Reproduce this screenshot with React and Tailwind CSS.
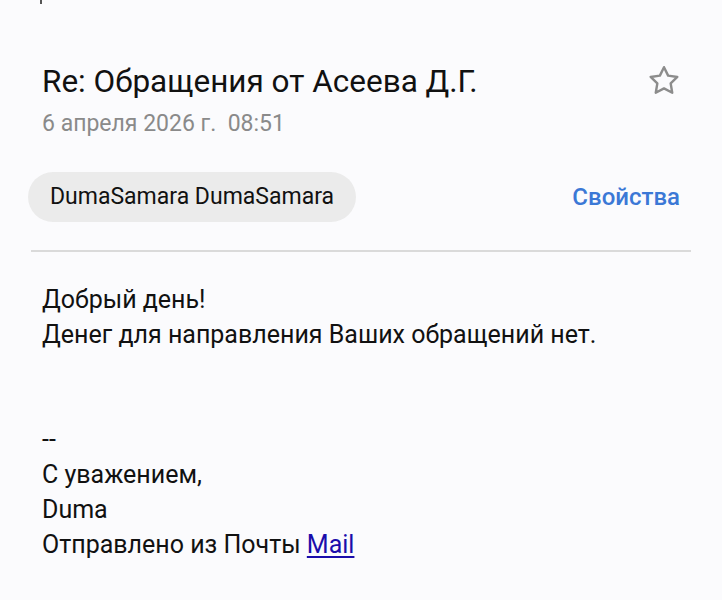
import React from 'react';

const Star = () => (
  <svg width="36" height="36" viewBox="0 0 24 24" fill="none" stroke="#8c8c8c" strokeWidth="1.6" strokeLinejoin="round">
    <path d="M12 2.8l2.75 5.6 6.15.9-4.45 4.35 1.05 6.15L12 16.9l-5.5 2.9 1.05-6.15L3.1 9.3l6.15-.9L12 2.8z" />
  </svg>
);

export default function App() {
  const font = { fontFamily: 'Roboto, "Noto Sans", sans-serif' };
  return (
    <div className="w-[722px] h-[600px] bg-[#fbfbfd] overflow-hidden relative" style={font}>
      <div className="absolute left-[40px] top-0 w-[2px] h-[4px] bg-[#555]" />
      <div className="pt-[62px] pl-[42px] pr-[38px] flex items-start justify-between">
        <div className="text-[31.5px] leading-[40px] text-[#111]">Re: Обращения от Асеева Д.Г.</div>
        <div className="mt-[1px] mr-[2px]"><Star /></div>
      </div>
      <div className="pl-[42px] mt-[8px] text-[23px] leading-[28px] text-[#8a8a8a] whitespace-pre">6 апреля 2026 г.  08:51</div>
      <div className="mt-[34px] pl-[28px] pr-[42px] flex items-center justify-between">
        <div className="h-[50px] px-[22px] rounded-full bg-[#ebebeb] flex items-center text-[23px] text-[#111]">DumaSamara DumaSamara</div>
        <div className="text-[24px] font-medium text-[#3b78d6]">Свойства</div>
      </div>
      <div className="mx-[31px] mt-[28px] h-[2px] bg-[#dadada]" />
      <div className="pl-[42px] mt-[30px] text-[25px] leading-[35px] text-[#111]">
        <div>Добрый день!</div>
        <div>Денег для направления Ваших обращений нет.</div>
        <div className="h-[35px]" />
        <div className="h-[35px]" />
        <div>--</div>
        <div>С уважением,</div>
        <div>Duma</div>
        <div>Отправлено из Почты <a href="#" className="text-[#1a0dab] underline underline-offset-[3px]">Mail</a></div>
      </div>
    </div>
  );
}
